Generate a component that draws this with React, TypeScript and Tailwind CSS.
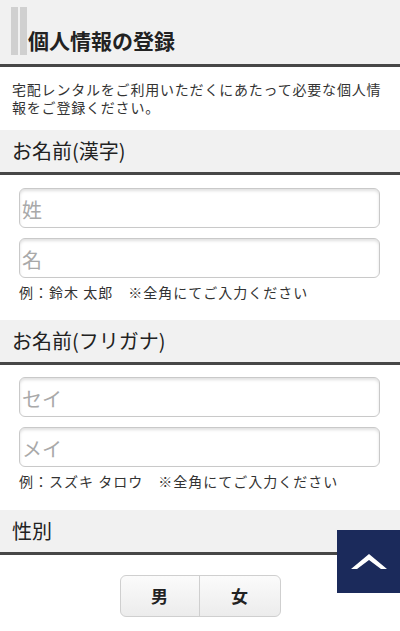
import React from 'react';

const font = { fontFamily: '"Noto Sans CJK JP", "Noto Sans", sans-serif' };

const SectionHeader: React.FC<{ title: string }> = ({ title }) => (
  <div className="h-[45px] bg-[#f1f1f1] border-b-[3px] border-[#474747] flex items-center px-3">
    <h2 className="text-[20px] text-[#222] leading-none">{title}</h2>
  </div>
);

const TextInput: React.FC<{ placeholder: string }> = ({ placeholder }) => (
  <input
    type="text"
    placeholder={placeholder}
    className="w-full h-[40px] rounded-[6px] border border-[#c9c9c9] bg-white px-[2px] pt-[3px] text-[20px] text-[#333] placeholder:text-[#a9a9a9] shadow-[inset_0_2px_3px_rgba(0,0,0,0.12)] outline-none"
  />
);

export default function App() {
  return (
    <div className="relative min-h-[631px] bg-white text-[#333]" style={font}>
      <div className="h-[67px] bg-[#f1f1f1] border-b-[3px] border-[#474747] flex items-start pl-[11px] pt-[7px]">
        <div className="flex gap-[2px] h-[48px]">
          <div className="w-[7px] bg-[#d0d0d0]" />
          <div className="w-[7px] bg-[#d0d0d0]" />
        </div>
        <h1 className="self-end mb-[13px] text-[21px] font-bold text-[#222] leading-none pl-[1px]">個人情報の登録</h1>
      </div>

      <p className="px-3 pt-[13px] pb-[14px] text-[14px] tracking-[0.8px] leading-[18px] text-[#333]">
        宅配レンタルをご利用いただくにあたって必要な個人情報をご登録ください。
      </p>

      <SectionHeader title="お名前(漢字)" />
      <div className="pl-[19px] pr-[20px] pt-[13px] pb-[19px] flex flex-col gap-[10px]">
        <TextInput placeholder="姓" />
        <TextInput placeholder="名" />
        <p className="-mt-[5px] text-[14px] tracking-[1px] leading-[18px] text-[#333]">例：鈴木 太郎　※全角にてご入力ください</p>
      </div>

      <SectionHeader title="お名前(フリガナ)" />
      <div className="pl-[19px] pr-[20px] pt-[12px] pb-[20px] flex flex-col gap-[10px]">
        <TextInput placeholder="セイ" />
        <TextInput placeholder="メイ" />
        <p className="-mt-[5px] text-[14px] tracking-[1px] leading-[18px] text-[#333]">例：スズキ タロウ　※全角にてご入力ください</p>
      </div>

      <SectionHeader title="性別" />
      <div className="pt-[20px] pb-[14px] flex justify-center">
        <div className="flex w-[161px] h-[42px] rounded-[6px] border border-[#cfcfcf] overflow-hidden bg-gradient-to-b from-[#fbfbfb] to-[#ececec]">
          <button className="w-[79px] border-r border-[#cfcfcf] text-[17px] font-bold text-[#222]">男</button>
          <button className="flex-1 text-[17px] font-bold text-[#222]">女</button>
        </div>
      </div>

      <button
        aria-label="ページトップへ"
        className="absolute right-0 top-[530px] w-[63px] h-[63px] bg-[#1b2a5b] flex items-center justify-center"
      >
        <svg width="36" height="18" viewBox="0 0 36 18">
          <path d="M0 16 L18 1 L36 16 L30 16 L18 7 L6 16 Z" fill="#fff" />
        </svg>
      </button>
    </div>
  );
}
